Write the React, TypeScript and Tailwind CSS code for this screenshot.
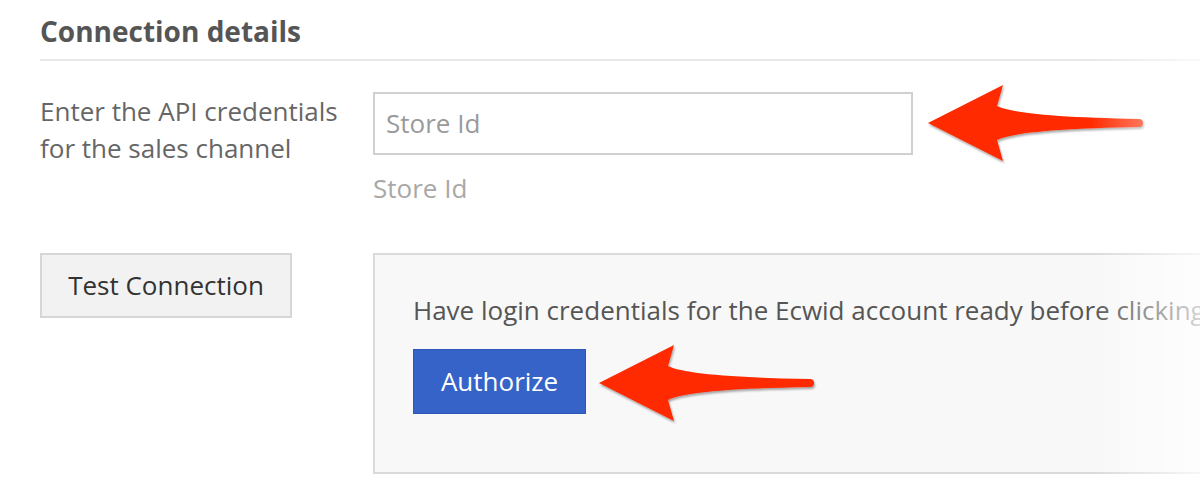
import React from "react";

function Arrow({ x, y }: { x: number; y: number }) {
  // tip of the arrow at (x, y)
  return (
    <svg
      className="absolute"
      style={{ left: x - 5, top: y - 45 }}
      width="230"
      height="95"
      viewBox="0 0 230 95"
    >
      <defs>
        <filter id="sh" x="-10%" y="-20%" width="130%" height="150%">
          <feDropShadow dx="1" dy="2" stdDeviation="1.2" floodColor="#000" floodOpacity="0.35" />
        </filter>
      </defs>
      <path
        d="M5,45 L80,7 L74,28 Q96,39 216,41 A4,4 0 0 1 216,49 Q96,51 74,62 L80,83 Z"
        fill="#ff2a00"
        filter="url(#sh)"
      />
    </svg>
  );
}

export default function App() {
  return (
    <div
      className="relative w-[1200px] h-[500px] overflow-hidden bg-white"
      style={{ fontFamily: '"Open Sans", "Noto Sans", sans-serif' }}
    >
      <div className="pl-10">
        <div className="pt-[13px] text-[28px] leading-[36px] font-bold text-[#555555]">
          Connection details
        </div>
        <div className="mt-[10px] h-[2px] bg-[#e8e8e8]" />

        <div className="mt-[31px] flex">
          <div className="w-[333px] shrink-0 pt-[1px] text-[26px] leading-[37px] text-[#666666]">
            Enter the API credentials
            <br />
            for the sales channel
          </div>
          <div className="flex flex-col shrink-0">
            <div className="w-[540px] h-[63px] border-2 border-[#d0d0d0] bg-white flex items-center pl-[11px]">
              <span className="text-[26px] text-[#9a9a9a]">Store Id</span>
            </div>
            <div className="mt-[14px] text-[26px] leading-[38px] text-[#a8a8a8]">Store Id</div>
          </div>
        </div>

        <div className="mt-[46px] flex">
          <div className="w-[333px] shrink-0">
            <div className="w-[252px] h-[65px] border-2 border-[#d6d6d6] bg-[#f2f2f2] flex items-center justify-center text-[26px] text-[#333333]">
              Test Connection
            </div>
          </div>
          <div className="w-[900px] h-[221px] border-2 border-[#dadada] bg-[#f8f8f8] pl-[38px] pt-[36px] shrink-0">
            <div className="text-[26px] leading-[38px] text-[#555555] whitespace-nowrap">
              Have login credentials for the Ecwid account ready before clicking Authorize
            </div>
            <div className="mt-[20px] w-[173px] h-[65px] bg-[#3563c8] border border-[#2e57b8] flex items-center justify-center text-[26px] text-white">
              Authorize
            </div>
          </div>
        </div>
      </div>

      <Arrow x={928} y={123} />
      <Arrow x={599} y={383} />

      <div className="absolute top-0 right-0 h-full w-[110px] bg-gradient-to-r from-white/0 to-white/75 pointer-events-none" />
    </div>
  );
}
